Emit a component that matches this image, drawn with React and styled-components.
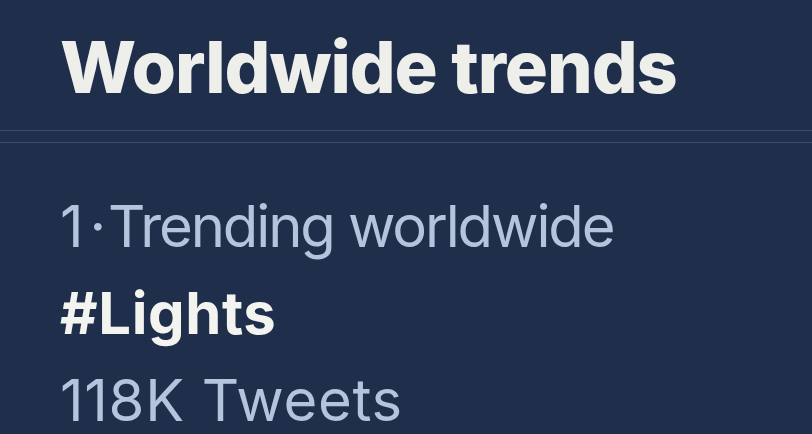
import React from 'react';
import styled, { createGlobalStyle } from 'styled-components';

const Global = createGlobalStyle`
  html, body {
    margin: 0;
    padding: 0;
    background: #1f2e4b;
  }
  body {
    font-family: Inter, "Noto Sans", "Liberation Sans", sans-serif;
    -webkit-font-smoothing: antialiased;
  }
`

const Page = styled.div`
  width: 812px;
  height: 434px;
  overflow: hidden;
  background: #1f2e4b;
`

const Header = styled.header`
  height: 131px;
  box-sizing: border-box;
  padding: 27px 0 0 60px;
  border-bottom: 1px solid #3d4c68;
`

const Title = styled.h1`
  margin: 0;
  font-size: 72px;
  line-height: 80px;
  font-weight: 800;
  letter-spacing: -1.1px;
  color: #eeeeea;
`

const Spacer = styled.div`
  height: 11px;
  border-bottom: 1px solid #3d4c68;
`

const Trend = styled.section`
  padding: 40px 0 0 60px;
  display: flex;
  flex-direction: column;
`

const Line = styled.div`
  font-size: 58px;
  line-height: 87px;
  font-weight: ${p => (p.$bold ? 700 : 400)};
  letter-spacing: ${p => p.$track || '0px'};
  color: ${p => (p.$bold ? '#f3f3ef' : '#b3c4dc')};
  white-space: nowrap;
`

const Dot = styled.span`
  padding: 0 4px 0 8px;
`

const App = () => {
  return (
    <>
      <Global />
      <Page>
        <Header>
          <Title>Worldwide trends</Title>
        </Header>
        <Spacer />
        <Trend>
          <Line $track="-2.1px">1<Dot>·</Dot>Trending worldwide</Line>
          <Line $bold $track="0.6px">#Lights</Line>
          <Line $track="0.7px">118K Tweets</Line>
        </Trend>
      </Page>
    </>
  );
}

export default App;
